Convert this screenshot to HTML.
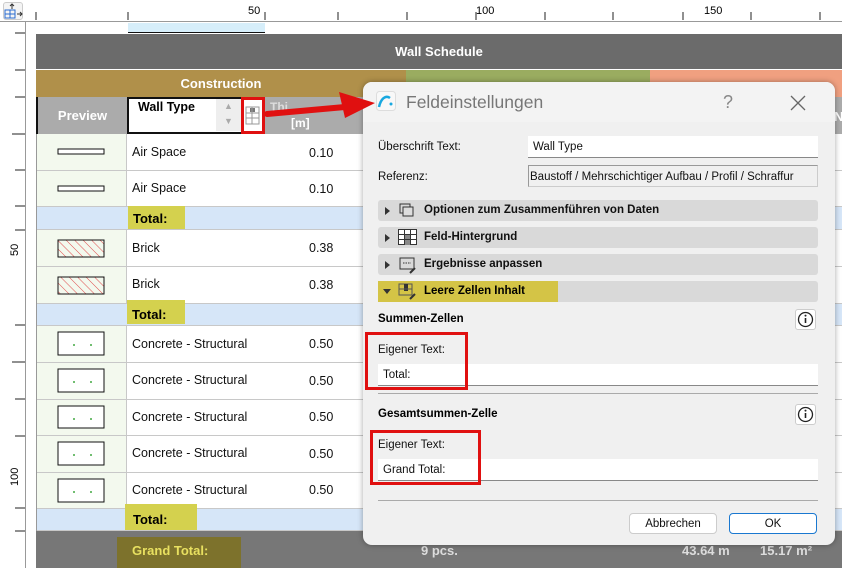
<!DOCTYPE html>
<html><head><meta charset="utf-8"><style>
*{margin:0;padding:0;box-sizing:border-box}
body{width:842px;height:568px;overflow:hidden;background:#fff;font-family:"Liberation Sans",Arial,sans-serif;position:relative}
.a{position:absolute}
.cell{position:absolute;font-size:12.5px;color:#111}
.row{position:absolute;left:36px;width:806px;border-bottom:1px solid #c8c8c8}
.pv{position:absolute;left:36px;width:91px;background:#f3f9ee;border-right:1px solid #c8c8c8}
.tot{position:absolute;left:36px;width:806px;background:#d6e6f8;border-bottom:1px solid #c8c8c8}
.hl{position:absolute;background:#d4d14e;font-weight:bold;font-size:13px;padding:5px 0 0 5px}
.dl{font-family:"Liberation Sans",sans-serif;font-size:11.5px;color:#111}
.bar{position:absolute;left:378px;width:440px;height:21px;background:#d9d9d9;border-radius:3px;font-family:"Liberation Sans",sans-serif;font-weight:bold;font-size:11.5px;color:#111}
.bar span{position:absolute;left:46px;top:4px}
.tri{position:absolute;left:7px;top:7px;width:0;height:0;border-left:5px solid #333;border-top:4px solid transparent;border-bottom:4px solid transparent}
.inp{position:absolute;background:#fff;border-bottom:1px solid #888;font-family:"Liberation Sans",sans-serif;font-size:11.5px;color:#111;padding:5px 0 0 5px}
.red{position:absolute;border:3px solid #e01010}
</style></head><body>
<div class="a" style="left:0;top:0;width:842px;height:22px;background:#fff;border-bottom:1px solid #999"></div>
<div class="a" style="left:0;top:22px;width:26px;height:546px;background:#fff;border-right:1px solid #999"></div>
<div class="a" style="left:3px;top:2px;width:20px;height:18px;border:1px solid #ccc;border-radius:3px;background:#f4f4f4"></div>
<svg class="a" style="left:4px;top:3px" width="20" height="18"><rect x="1" y="7" width="10" height="8" fill="none" stroke="#2a6bd0"/><line x1="1" y1="11" x2="11" y2="11" stroke="#2a6bd0"/><line x1="6" y1="7" x2="6" y2="15" stroke="#2a6bd0"/><path d="M8 6V1M6 3l2-2 2 2M13 11h5M16 9l2 2-2 2" stroke="#333" fill="none"/></svg>
<svg class="a" style="left:0;top:0" width="842" height="568">
<g stroke="#222" stroke-width="1">
<line x1="36" y1="12" x2="36" y2="20"/><line x1="128" y1="12" x2="128" y2="20"/><line x1="265" y1="12" x2="265" y2="20"/><line x1="338" y1="12" x2="338" y2="20"/><line x1="407" y1="12" x2="407" y2="20"/><line x1="476" y1="12" x2="476" y2="20"/><line x1="545" y1="12" x2="545" y2="20"/><line x1="613" y1="12" x2="613" y2="20"/><line x1="683" y1="12" x2="683" y2="20"/><line x1="751" y1="12" x2="751" y2="20"/><line x1="820" y1="12" x2="820" y2="20"/>
<line x1="15" y1="33" x2="25" y2="33"/><line x1="15" y1="70" x2="25" y2="70"/><line x1="15" y1="97" x2="25" y2="97"/><line x1="12" y1="134" x2="25" y2="134"/><line x1="15" y1="170" x2="25" y2="170"/><line x1="15" y1="206" x2="25" y2="206"/><line x1="15" y1="230" x2="25" y2="230"/><line x1="15" y1="325" x2="25" y2="325"/><line x1="12" y1="362" x2="25" y2="362"/><line x1="15" y1="399" x2="25" y2="399"/><line x1="15" y1="436" x2="25" y2="436"/><line x1="15" y1="508" x2="25" y2="508"/><line x1="15" y1="531" x2="25" y2="531"/>
</g>
<text x="248" y="14" font-size="11" font-family="Liberation Sans">50</text>
<text x="476" y="14" font-size="11" font-family="Liberation Sans">100</text>
<text x="704" y="14" font-size="11" font-family="Liberation Sans">150</text>
<text transform="translate(18,256) rotate(-90)" font-size="11" font-family="Liberation Sans">50</text>
<text transform="translate(18,486) rotate(-90)" font-size="11" font-family="Liberation Sans">100</text>
</svg>
<div class="a" style="left:128px;top:23px;width:137px;height:10px;background:#d6eefa;border-bottom:1px solid #111"></div>
<div class="a" style="left:36px;top:34px;width:806px;height:35px;background:#6b6b6b;color:#fff;font-weight:bold;font-size:13px;text-align:center;padding-top:10px">Wall Schedule</div>
<div class="a" style="left:36px;top:70px;width:370px;height:27px;background:#b0904a;color:#fff;font-weight:bold;font-size:13px;text-align:center;padding-top:6px">Construction</div>
<div class="a" style="left:406px;top:70px;width:244px;height:27px;background:#9aac60"></div>
<div class="a" style="left:650px;top:70px;width:192px;height:27px;background:#f0a080"></div>
<div class="a" style="left:36px;top:97px;width:806px;height:37px;background:#ababab"></div>
<div class="a" style="left:36px;top:97px;width:91px;height:37px;color:#fff;font-weight:bold;font-size:13px;text-align:center;padding-top:11px;border-left:2px solid #111">Preview</div>
<div class="a" style="left:127px;top:97px;width:138px;height:37px;background:#fff;border:2px solid #111"></div>
<div class="a" style="left:138px;top:100px;font-weight:bold;font-size:12.5px">Wall Type</div>
<div class="a" style="left:216px;top:99px;width:25px;height:32px;background:#eee;color:#aaa;font-size:9px;text-align:center;line-height:15px">▲<br>▼</div>
<div class="a" style="left:270px;top:100px;color:#ddd;font-weight:bold;font-size:12px">Thi</div>
<div class="a" style="left:291px;top:116px;color:#fff;font-weight:bold;font-size:12px">[m]</div>
<div class="red" style="left:241px;top:97px;width:24px;height:37px"></div>
<svg class="a" style="left:245px;top:105px" width="16" height="22"><rect x="1" y="2" width="13" height="17" fill="#fff" stroke="#999"/><rect x="5" y="3" width="5" height="4" fill="#777"/><line x1="1" y1="8" x2="14" y2="8" stroke="#999"/><line x1="1" y1="13" x2="14" y2="13" stroke="#999"/><line x1="7" y1="2" x2="7" y2="19" stroke="#999"/></svg>
<div class="row" style="top:134px;height:37px"></div><div class="pv" style="top:134px;height:36px"></div>
<div class="row" style="top:171px;height:36px"></div><div class="pv" style="top:171px;height:35px"></div>
<div class="tot" style="top:207px;height:23px"></div>
<div class="row" style="top:230px;height:37px"></div><div class="pv" style="top:230px;height:36px"></div>
<div class="row" style="top:267px;height:37px"></div><div class="pv" style="top:267px;height:36px"></div>
<div class="tot" style="top:304px;height:22px"></div>
<div class="row" style="top:326px;height:37px"></div><div class="pv" style="top:326px;height:36px"></div>
<div class="row" style="top:363px;height:37px"></div><div class="pv" style="top:363px;height:36px"></div>
<div class="row" style="top:400px;height:36px"></div><div class="pv" style="top:400px;height:35px"></div>
<div class="row" style="top:436px;height:37px"></div><div class="pv" style="top:436px;height:36px"></div>
<div class="row" style="top:473px;height:36px"></div><div class="pv" style="top:473px;height:35px"></div>
<div class="tot" style="top:509px;height:22px"></div>
<div class="a" style="left:36px;top:531px;width:806px;height:37px;background:#777"></div>
<div class="a" style="left:36px;top:134px;width:1px;height:397px;background:#999"></div>
<svg class="a" style="left:36px;top:134px" width="91" height="397">
<rect x="22" y="15" width="46" height="5" fill="#fff" stroke="#111"/>
<rect x="22" y="52" width="46" height="5" fill="#fff" stroke="#111"/>
<defs><pattern id="h" width="6" height="6" patternUnits="userSpaceOnUse" patternTransform="rotate(-45)"><line x1="0" y1="0" x2="0" y2="6" stroke="#e05050" stroke-width="1"/></pattern></defs>
<rect x="22" y="106" width="46" height="17" fill="url(#h)" stroke="#111"/>
<rect x="22" y="143" width="46" height="17" fill="url(#h)" stroke="#111"/>
<g fill="#fff" stroke="#111"><rect x="22" y="198" width="46" height="23"/><rect x="22" y="235" width="46" height="23"/><rect x="22" y="272" width="46" height="22"/><rect x="22" y="308" width="46" height="23"/><rect x="22" y="345" width="46" height="23"/></g>
<g fill="#4a4"><circle cx="38" cy="211" r="1"/><circle cx="55" cy="211" r="1"/><circle cx="38" cy="248" r="1"/><circle cx="55" cy="248" r="1"/><circle cx="38" cy="285" r="1"/><circle cx="55" cy="285" r="1"/><circle cx="38" cy="321" r="1"/><circle cx="55" cy="321" r="1"/><circle cx="38" cy="358" r="1"/><circle cx="55" cy="358" r="1"/></g>
</svg>
<div class="cell" style="left:132px;top:145px">Air Space</div><div class="cell" style="left:309px;top:146px">0.10</div>
<div class="cell" style="left:132px;top:181px">Air Space</div><div class="cell" style="left:309px;top:182px">0.10</div>
<div class="hl" style="left:128px;top:206px;width:57px;height:23px">Total:</div>
<div class="cell" style="left:132px;top:241px">Brick</div><div class="cell" style="left:309px;top:241px">0.38</div>
<div class="cell" style="left:132px;top:277px">Brick</div><div class="cell" style="left:309px;top:278px">0.38</div>
<div class="hl" style="left:127px;top:300px;width:58px;height:24px;padding-top:7px">Total:</div>
<div class="cell" style="left:132px;top:337px">Concrete - Structural</div><div class="cell" style="left:309px;top:337px">0.50</div>
<div class="cell" style="left:132px;top:373px">Concrete - Structural</div><div class="cell" style="left:309px;top:374px">0.50</div>
<div class="cell" style="left:132px;top:410px">Concrete - Structural</div><div class="cell" style="left:309px;top:410px">0.50</div>
<div class="cell" style="left:132px;top:446px">Concrete - Structural</div><div class="cell" style="left:309px;top:447px">0.50</div>
<div class="cell" style="left:132px;top:483px">Concrete - Structural</div><div class="cell" style="left:309px;top:483px">0.50</div>
<div class="hl" style="left:125px;top:504px;width:72px;height:26px;padding:8px 0 0 8px">Total:</div>
<div class="a" style="left:117px;top:537px;width:124px;height:31px;background:#7d722c;color:#e8e060;font-weight:bold;font-size:13px;padding:6px 0 0 15px">Grand Total:</div>
<div class="a" style="left:421px;top:543px;color:#ddd;font-weight:bold;font-size:13px">9 pcs.</div>
<div class="a" style="left:682px;top:543px;color:#ddd;font-weight:bold;font-size:13px">43.64 m</div>
<div class="a" style="left:760px;top:543px;color:#ddd;font-weight:bold;font-size:13px">15.17 m²</div>
<div class="a" style="left:834px;top:109px;color:#fff;font-weight:bold;font-size:13px">N</div>
<div class="a" style="left:363px;top:82px;width:472px;height:463px;background:#f0f0f0;border-radius:9px;box-shadow:0 0 6px rgba(0,0,0,.35)"></div>
<div class="a" style="left:363px;top:82px;width:472px;height:40px;background:#f3f3f3;border-radius:9px 9px 0 0"></div>
<svg class="a" style="left:376px;top:91px" width="20" height="20"><rect x="0.5" y="0.5" width="19" height="19" rx="3" fill="#f8f8f8" stroke="#ddd"/><path d="M3 16C5 7 10 4 14 7" stroke="#18a8e0" stroke-width="2.5" fill="none"/><circle cx="15" cy="13" r="1.5" fill="#18a8e0"/></svg>
<div class="a" style="left:406px;top:92px;font-family:'Liberation Sans',sans-serif;font-size:17.5px;color:#777">Feldeinstellungen</div>
<div class="a" style="left:723px;top:92px;font-family:'Liberation Sans',sans-serif;font-size:18px;color:#888">?</div>
<svg class="a" style="left:789px;top:94px" width="18" height="18"><path d="M2 2L16 16M16 2L2 16" stroke="#666" stroke-width="1.3"/></svg>
<svg class="a" style="left:265px;top:88px" width="112" height="40"><path d="M2 26L80 19" stroke="#e01010" stroke-width="6" stroke-linecap="round"/><path d="M110 15L74 4L80 30Z" fill="#e01010"/></svg>
<div class="a dl" style="left:378px;top:141px">Überschrift Text:</div>
<div class="inp" style="left:528px;top:136px;width:290px;height:22px">Wall Type</div>
<div class="a dl" style="left:378px;top:171px">Referenz:</div>
<div class="a dl" style="left:528px;top:165px;width:290px;height:22px;background:#f0f0f0;border:1px solid #ccc;border-top-color:#999;border-left-color:#999;padding:5px 0 0 1px">Baustoff / Mehrschichtiger Aufbau / Profil / Schraffur</div>
<div class="bar" style="top:200px"><div class="tri"></div><svg class="a" style="left:21px;top:3px" width="16" height="15"><rect x="1" y="1" width="10" height="9" fill="none" stroke="#333"/><rect x="4" y="4" width="10" height="9" fill="#ddd" stroke="#333"/></svg><span>Optionen zum Zusammenführen von Daten</span></div>
<div class="bar" style="top:227px"><div class="tri"></div><svg class="a" style="left:20px;top:2px" width="20" height="17"><rect x="0.5" y="0.5" width="18" height="15" fill="#fff" stroke="#333"/><rect x="7" y="6" width="5" height="10" fill="#888"/><path d="M0 5.5h19M0 10.5h19M6.5 0v16M12.5 0v16" stroke="#333"/></svg><span>Feld-Hintergrund</span></div>
<div class="bar" style="top:254px"><div class="tri"></div><svg class="a" style="left:20px;top:2px" width="20" height="19"><rect x="2" y="2" width="14" height="11" fill="none" stroke="#333"/><path d="M5 7h8" stroke="#333" stroke-dasharray="1.5 1"/><path d="M12 17l5-5" stroke="#333" stroke-width="2"/></svg><span>Ergebnisse anpassen</span></div>
<div class="bar" style="top:281px"></div>
<div class="a" style="left:378px;top:281px;width:180px;height:21px;background:#d4c446"><div style="position:absolute;left:5px;top:8px;border-top:5px solid #333;border-left:4px solid transparent;border-right:4px solid transparent"></div><svg class="a" style="left:20px;top:1px" width="20" height="19"><rect x="1" y="2" width="13" height="11" fill="none" stroke="#555"/><rect x="6" y="2" width="4" height="7" fill="#333"/><path d="M1 7h13" stroke="#555"/><path d="M12 17l5-5" stroke="#333" stroke-width="2"/></svg><span style="position:absolute;left:46px;top:4px;font-family:'Liberation Sans',sans-serif;font-weight:bold;font-size:11.5px">Leere Zellen Inhalt</span></div>
<div class="a" style="left:378px;top:313px;font-family:'Liberation Sans',sans-serif;font-weight:bold;font-size:11.5px">Summen-Zellen</div>
<div class="a" style="left:795px;top:309px;width:21px;height:21px;background:#fff;border:1px solid #ccc;border-radius:3px"><svg width="19" height="19"><circle cx="9.5" cy="9.5" r="7" fill="none" stroke="#222" stroke-width="1.3"/><path d="M9.5 8v5" stroke="#222" stroke-width="1.6"/><circle cx="9.5" cy="5.6" r="1" fill="#222"/></svg></div>
<div class="a dl" style="left:378px;top:344px">Eigener Text:</div>
<div class="inp" style="left:378px;top:364px;width:440px;height:22px">Total:</div>
<div class="red" style="left:365px;top:332px;width:103px;height:58px"></div>
<div class="a" style="left:378px;top:393px;width:440px;height:1px;background:#aaa"></div>
<div class="a" style="left:378px;top:408px;font-family:'Liberation Sans',sans-serif;font-weight:bold;font-size:11.5px">Gesamtsummen-Zelle</div>
<div class="a" style="left:795px;top:404px;width:21px;height:21px;background:#fff;border:1px solid #ccc;border-radius:3px"><svg width="19" height="19"><circle cx="9.5" cy="9.5" r="7" fill="none" stroke="#222" stroke-width="1.3"/><path d="M9.5 8v5" stroke="#222" stroke-width="1.6"/><circle cx="9.5" cy="5.6" r="1" fill="#222"/></svg></div>
<div class="a dl" style="left:378px;top:439px">Eigener Text:</div>
<div class="inp" style="left:378px;top:459px;width:440px;height:22px">Grand Total:</div>
<div class="red" style="left:370px;top:430px;width:111px;height:55px"></div>
<div class="a" style="left:378px;top:500px;width:440px;height:1px;background:#aaa"></div>
<div class="a dl" style="left:629px;top:513px;width:88px;height:21px;background:#fff;border:1px solid #ccc;border-radius:4px;text-align:center;padding-top:4px">Abbrechen</div>
<div class="a dl" style="left:729px;top:513px;width:88px;height:21px;background:#fff;border:1px solid #1a78d0;border-radius:4px;text-align:center;padding-top:4px">OK</div>
</body></html>
